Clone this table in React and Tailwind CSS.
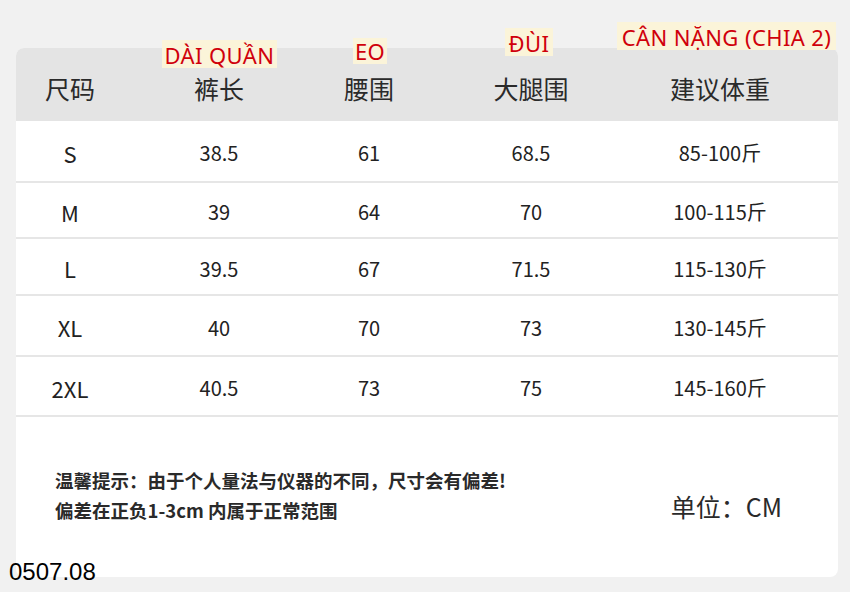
import React from "react";

const rows = [
  ["S", "38.5", "61", "68.5", "85-100斤", "h-[62px]"],
  ["M", "39", "64", "70", "100-115斤", "h-[56px]"],
  ["L", "39.5", "67", "71.5", "115-130斤", "h-[57px]"],
  ["XL", "40", "70", "73", "130-145斤", "h-[61px]"],
  ["2XL", "40.5", "73", "75", "145-160斤", "h-[60px]"],
];

const cols = "grid grid-cols-[108px_190px_110px_214px_164px_1fr]";

function Label({ className, children }) {
  return (
    <div
      className={`absolute flex items-end justify-center pb-[2px] bg-[#fbf4d9] text-[#d0000b] text-[22px] leading-none tracking-[0.4px] whitespace-nowrap [font-family:'Noto_Sans',sans-serif] ${className}`}
    >
      {children}
    </div>
  );
}

export default function App() {
  return (
    <div className="relative w-[850px] h-[592px] bg-[#f1f1f1] overflow-hidden [font-family:'Noto_Sans_CJK_SC','Noto_Sans',sans-serif]">
      <div className="pt-[48px] pl-[16px] pr-[12px]">
        <div className="rounded-[8px] overflow-hidden bg-white w-[822px] h-[529px] flex flex-col">
          <div className={`${cols} h-[73px] pt-[8px] bg-[#e4e4e4] items-center text-[25px] text-[#2a2a2a] text-center`}>
            <div>尺码</div>
            <div>裤长</div>
            <div>腰围</div>
            <div>大腿围</div>
            <div>建议体重</div>
            <div></div>
          </div>
          {rows.map((r) => (
            <div
              key={r[0]}
              className={`${cols} ${r[5]} pt-[4px] items-center text-center text-[20px] text-[#222] border-b-2 border-[#e6e6e6]`}
            >
              <div className="text-[22px]">{r[0]}</div>
              <div>{r[1]}</div>
              <div>{r[2]}</div>
              <div>{r[3]}</div>
              <div>{r[4]}</div>
              <div></div>
            </div>
          ))}
          <div className="flex-1 flex items-center pl-[39px] pr-[56px] pb-[4px]">
            <div className="flex-1 text-[18.5px] leading-[30px] font-semibold text-[#2a2a2a]">
              <div>温馨提示：由于个人量法与仪器的不同，尺寸会有偏差!</div>
              <div>偏差在正负1-3cm 内属于正常范围</div>
            </div>
            <div className="text-[25px] text-[#2a2a2a] mt-[24px]">单位：CM</div>
          </div>
        </div>
      </div>

      <Label className="left-[162px] top-[40px] w-[115px] h-[28px]">DÀI QUẦN</Label>
      <Label className="left-[353px] top-[38px] w-[34px] h-[26px]">EO</Label>
      <Label className="left-[505px] top-[28px] w-[48px] h-[28px]">ĐÙI</Label>
      <Label className="left-[617px] top-[22px] w-[219px] h-[28px]">CÂN NẶNG (CHIA 2)</Label>

      <div className="absolute left-[9px] top-[558px] text-[24px] leading-[28px] text-black [font-family:'Liberation_Sans',sans-serif]">
        0507.08
      </div>
    </div>
  );
}
